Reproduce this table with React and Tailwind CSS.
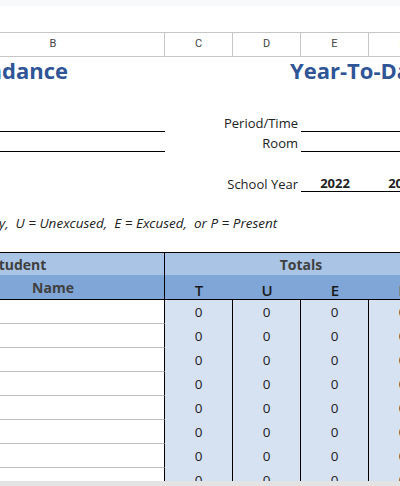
export default function App() {
  const rows = Array.from({ length: 8 });

  return (
    <div className="w-[400px] h-[486px] overflow-hidden bg-white flex flex-col font-['Open_Sans',sans-serif] text-[#222]">
      {/* toolbar strip */}
      <div className="h-[6px] shrink-0 bg-[#f8f9fa]" />

      <div className="h-[475px] shrink-0 overflow-hidden">
        <div className="ml-[-58px] w-[600px]">
          <div className="h-[26px]" />

          {/* column letters */}
          <div className="grid grid-cols-[223px_68px_68px_68px_68px_68px] h-[25px] border-y border-[#c6c6c6] font-['Roboto',sans-serif] text-[11px] text-[#444]">
            {['B', 'C', 'D', 'E', 'F', 'G'].map(l => (
              <div key={l} className="flex items-center justify-center border-r border-[#c6c6c6]">{l}</div>
            ))}
          </div>

          {/* titles */}
          <div className="flex items-center h-[27px] text-[22px] font-bold text-[#2f5597] whitespace-nowrap">
            <div className="w-[126px] flex justify-end">
              <span>Class Attendance</span>
            </div>
            <div className="w-[222px] shrink-0" />
            <span>Year-To-Date Attendance</span>
          </div>

          <div className="h-[28px]" />

          {/* form rows */}
          <FormRow label="Period/Time" leftLine />
          <FormRow label="Room" leftLine />

          <div className="h-[20px]" />

          <div className="grid grid-cols-[223px_68px_68px_68px_68px_68px] h-[20px] text-[13px]">
            <div />
            <div className="col-span-2 flex items-end justify-end pr-[3px] pb-[1px] leading-[14px]">School Year</div>
            <div className="flex items-end justify-center border-b border-black font-bold leading-[14px] pb-[1px]">2022</div>
            <div className="flex items-end justify-center border-b border-black font-bold leading-[14px] pb-[1px]">2023</div>
            <div className="border-b border-black" />
          </div>

          <div className="h-[22px]" />

          {/* legend */}
          <div className="h-[18px] flex items-center pl-[57px] text-[13.5px] italic whitespace-pre">
            {'y,  U = Unexcused,  E = Excused,  or P = Present'}
          </div>

          <div className="h-[20px]" />

          {/* table header */}
          <div className="grid grid-cols-[223px_68px_68px_68px_68px_68px] h-[23px] border-t border-black bg-[#a9c4e5] text-[14px] font-bold text-[#404040]">
            <div className="flex items-center pl-[49px] border-r border-black">Student</div>
            <div className="col-span-4 flex items-center justify-center">Totals</div>
            <div />
          </div>
          <div className="grid grid-cols-[223px_68px_68px_68px_68px_68px] h-[25px] border-b border-black bg-[#7fa6d6] text-[14px] font-bold text-[#404040]">
            <div className="flex items-center justify-center border-r border-black">Name</div>
            {['T', 'U', 'E', 'P'].map(l => (
              <div key={l} className="flex items-end justify-center leading-[17px] text-[15px] font-semibold text-[#1a1a1a]">{l}</div>
            ))}
            <div />
          </div>

          {/* data rows */}
          {rows.map((_, i) => (
            <div key={i} className="grid grid-cols-[223px_68px_68px_68px_68px_68px] h-[24px] text-[13.5px]">
              <div className="border-b border-[#bfbfbf] border-r border-r-black bg-white" />
              {[0, 1, 2, 3].map(j => (
                <div key={j} className="flex items-center justify-center bg-[#d6e1f2] border-r border-black">0</div>
              ))}
              <div />
            </div>
          ))}
        </div>
      </div>

      {/* scrollbar */}
      <div className="flex-1 bg-[#e3e3e3]" />
    </div>
  );
}

function FormRow({ label, leftLine }) {
  return (
    <div className="grid grid-cols-[223px_68px_68px_68px_68px_68px] h-[20px] text-[13px]">
      <div className={leftLine ? 'border-b border-black' : ''} />
      <div className="col-span-2 flex items-end justify-end pr-[3px] pb-[2px] leading-[14px]">{label}</div>
      <div className="col-span-3 border-b border-black" />
    </div>
  );
}
